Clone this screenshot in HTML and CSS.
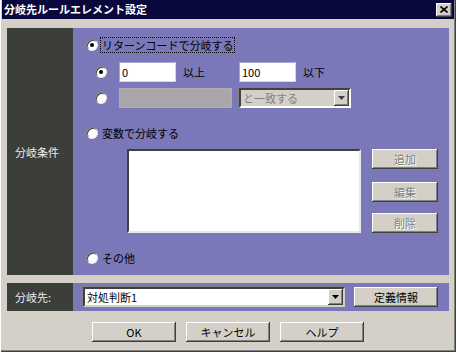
FILE: index.html
```html
<!DOCTYPE html>
<html>
<head>
  <meta charset="utf-8">
  <title>分岐先ルールエレメント設定</title>
  <link rel="stylesheet" href="styles.css">
</head>
<body>
  <div class="window">
    <div class="titlebar">
      <span class="title">分岐先ルールエレメント設定</span>
      <span class="close">
        <svg width="8" height="7" viewBox="0 0 8 7"><path d="M0.5 0.5 L7.5 6.5 M7.5 0.5 L0.5 6.5" stroke="#000" stroke-width="1.6"/></svg>
      </span>
    </div>
    <div class="main">
      <div class="group cond">
        <div class="side">分岐条件</div>
        <div class="pane">
          <div class="row r1">
            <span class="radio on"></span><span class="label focus">リターンコードで分岐する</span>
          </div>
          <div class="row r2 sub">
            <span class="radio on"></span>
            <span class="field short">0</span><span class="unit">以上</span>
            <span class="field short far">100</span><span class="unit">以下</span>
          </div>
          <div class="row r3 sub">
            <span class="radio"></span>
            <span class="field off long"></span>
            <span class="combo off">と一致する<span class="drop"><svg width="7" height="4" viewBox="0 0 7 4"><path d="M0 0 H7 L3.5 4 Z" fill="#404040"/></svg></span></span>
          </div>
          <div class="row r4">
            <span class="radio"></span><span class="label">変数で分岐する</span>
          </div>
          <div class="row r5">
            <div class="list"></div>
            <div class="list-btns">
              <span class="btn small disabled">追加</span>
              <span class="btn small disabled">編集</span>
              <span class="btn small disabled">削除</span>
            </div>
          </div>
          <div class="row r6">
            <span class="radio"></span><span class="label">その他</span>
          </div>
        </div>
      </div>
      <div class="group dest">
        <div class="side">分岐先:</div>
        <div class="pane">
          <span class="combo wide">対処判断1<span class="drop"><svg width="7" height="4" viewBox="0 0 7 4"><path d="M0 0 H7 L3.5 4 Z" fill="#000"/></svg></span></span>
          <span class="btn def">定義情報</span>
        </div>
      </div>
      <div class="actions">
        <span class="btn">OK</span>
        <span class="btn">キャンセル</span>
        <span class="btn">ヘルプ</span>
      </div>
    </div>
  </div>
</body>
</html>
```

FILE: styles.css
```css
html, body {
  margin: 0;
  width: 100%;
  height: 100%;
}
body {
  font-family: "Noto Sans CJK JP", "Noto Sans", sans-serif;
  font-size: 11px;
  color: #000;
  background: #d4d0c8;
}

.window {
  box-sizing: border-box;
  width: 456px;
  height: 352px;
  padding: 0 2px 2px 2px;
  background: #d4d0c8;
  box-shadow: inset 1px 0 #fff, inset -1px -1px #404040, inset -2px -2px #808080;
  display: flex;
  flex-direction: column;
}

.titlebar {
  height: 19px;
  background: #08083c;
  display: flex;
  align-items: center;
  justify-content: space-between;
  padding: 0 2px 0 2px;
}
.titlebar .title {
  color: #fff;
  font-weight: bold;
  font-size: 11px;
  line-height: 19px;
}
.titlebar .close {
  box-sizing: border-box;
  width: 16px;
  height: 14px;
  background: #d4d0c8;
  box-shadow: inset -1px -1px #404040, inset 1px 1px #fff, inset -2px -2px #808080;
  display: flex;
  align-items: center;
  justify-content: center;
}

.main {
  padding: 9px 5px 0 5px;
  display: flex;
  flex-direction: column;
}

.group {
  display: flex;
}
.group .side {
  width: 66px;
  flex: none;
  background: #3c3e3a;
  color: #ececec;
  padding-left: 8px;
  box-sizing: border-box;
  display: flex;
  align-items: center;
}
.group .pane {
  flex: 1;
  background: #7a78b8;
}
.cond {
  height: 247px;
}
.cond .pane {
  padding: 9px 0 0 13px;
}
.dest {
  height: 28px;
  margin-top: 8px;
}
.dest .pane {
  display: flex;
  align-items: center;
  padding-left: 10px;
}

.row {
  display: flex;
  align-items: center;
}
.r1 { height: 16px; }
.r2 { height: 20px; margin-top: 9px; }
.r3 { height: 20px; margin-top: 6px; }
.r4 { height: 16px; margin-top: 17px; }
.r5 { height: 84px; margin-top: 8px; align-items: stretch; }
.r6 { height: 16px; margin-top: 17px; }
.sub {
  padding-left: 9px;
}

.radio {
  box-sizing: border-box;
  width: 12px;
  height: 12px;
  flex: none;
  border-radius: 50%;
  background: #fff;
  border: 1px solid;
  border-color: #808080 #e8e8e8 #e8e8e8 #808080;
  box-shadow: inset 1px 1px #404040;
  position: relative;
}
.radio.on:after {
  content: "";
  position: absolute;
  left: 3px;
  top: 3px;
  width: 4px;
  height: 4px;
  border-radius: 50%;
  background: #000;
}

.label {
  margin-left: 2px;
  padding: 0 1px;
  border: 1px dotted transparent;
  line-height: 14px;
}
.label.focus {
  border-color: #000;
}

.field {
  box-sizing: border-box;
  height: 20px;
  line-height: 18px;
  padding-left: 2px;
  background: #fff;
  border: 1px solid;
  border-color: #a8a6d0 #d8d8ec #d8d8ec #a8a6d0;
  margin-left: 12px;
}
.field.short { width: 57px; }
.field.far { margin-left: 34px; }
.field.long { width: 113px; }
.field.off {
  background: #aaa6ab;
  border-color: #b0acb0;
}
.unit {
  margin-left: 7px;
}

.combo {
  box-sizing: border-box;
  height: 20px;
  line-height: 16px;
  padding-left: 2px;
  background: #fff;
  border: 2px solid;
  border-color: #404040 #fff #fff #404040;
  box-shadow: -1px -1px #808080;
  display: flex;
  align-items: center;
  justify-content: space-between;
}
.combo.off {
  width: 112px;
  margin-left: 7px;
  background: #d4d0c8;
  color: #808080;
}
.combo.wide {
  width: 262px;
  border-color: #404040 #d4d0c8 #d4d0c8 #404040;
}
.combo .drop {
  box-sizing: border-box;
  width: 15px;
  height: 16px;
  background: #d4d0c8;
  box-shadow: inset -1px -1px #404040, inset 1px 1px #fff, inset -2px -2px #808080;
  display: flex;
  align-items: center;
  justify-content: center;
}

.list {
  width: 234px;
  margin-left: 41px;
  box-sizing: border-box;
  background: #fff;
  border: 2px solid;
  border-color: #404040 #e8e8e8 #e8e8e8 #404040;
}
.list-btns {
  margin-left: 11px;
  display: flex;
  flex-direction: column;
}
.list-btns .btn:nth-child(2) { margin-top: 13px; }
.list-btns .btn:nth-child(3) { margin-top: 11px; }

.btn {
  box-sizing: border-box;
  width: 84px;
  height: 20px;
  line-height: 20px;
  text-align: center;
  background: #d4d0c8;
  box-shadow: inset -1px -1px #404040, inset 1px 1px #fff, inset -2px -2px #808080;
}
.btn.small {
  width: 66px;
}
.btn.disabled {
  color: #808080;
  text-shadow: 1px 1px #fff;
}
.btn.def {
  margin-left: 9px;
}

.actions {
  margin-top: 11px;
  display: flex;
  justify-content: center;
  gap: 10px;
}
```
